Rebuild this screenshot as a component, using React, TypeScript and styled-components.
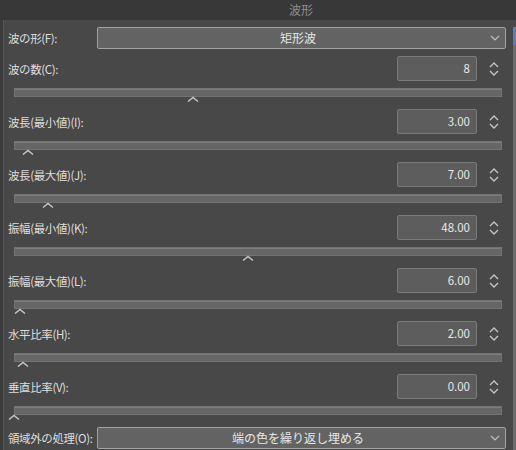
import React from "react";
import styled, { createGlobalStyle } from "styled-components";

const GlobalStyle = createGlobalStyle`
  html, body {
    margin: 0;
    padding: 0;
    background: #484848;
  }
  body {
    font-family: "Noto Sans CJK JP", "Noto Sans", sans-serif;
    font-size: 12px;
    color: #dedede;
    overflow: hidden;
  }
`;

const TitleBar = styled.div`
  height: 20px;
  background: #383838;
  color: #8e8e8e;
  font-size: 12px;
  line-height: 20px;
  padding-left: 289px;
`;

const Body = styled.div`
  display: flex;
  height: 430px;
`;

const Gutter = styled.div`
  width: 3px;
  background: #3c3c3c;
`;

const Panel = styled.div`
  flex: 1;
  display: flex;
  flex-direction: column;
  border-left: 1px solid #575757;
  padding: 7px 7px 0 4px;
`;

const ScrollStrip = styled.div`
  width: 3px;
  margin-top: 7px;
  display: flex;
  flex-direction: column;
  background: #6e6e6e;
`;

const ScrollThumb = styled.div`
  height: 18px;
  background: #5f7db5;
`;

const Row = styled.div<{ $gap?: number }>`
  display: flex;
  align-items: center;
  margin-bottom: ${(p) => p.$gap ?? 0}px;
`;

const Label = styled.div<{ $w?: number }>`
  width: ${(p) => (p.$w ? `${p.$w}px` : "auto")};
  flex: ${(p) => (p.$w ? "none" : "1")};
  white-space: nowrap;
  font-size: 11.5px;
  letter-spacing: -0.4px;
`;

const Select = styled.div`
  flex: 1;
  height: 22px;
  box-sizing: border-box;
  background: #636363;
  border: 1px solid #a2a2a2;
  border-radius: 2px;
  display: flex;
  align-items: center;
`;

const SelectText = styled.div`
  flex: 1;
  text-align: center;
  color: #e6e6e6;
  padding-left: 8px;
  line-height: 20px;
`;

const Chevron = styled.svg`
  width: 10px;
  height: 6px;
  margin-right: 5px;
`;

const Block = styled.div`
  display: flex;
  flex-direction: column;
`;

const NumBox = styled.div`
  width: 80px;
  height: 25px;
  box-sizing: border-box;
  background: #5d5d5d;
  border: 1px solid #7a7a7a;
  border-radius: 2px;
  color: #e8e8e8;
  text-align: right;
  padding-right: 6px;
  line-height: 23px;
  font-size: 11.5px;
`;

const Spin = styled.svg`
  width: 10px;
  height: 16px;
  margin: 0 7px 0 12px;
`;

const TrackWrap = styled.div`
  position: relative;
  margin: 7px 4px 12px 6px;
`;

const Track = styled.div`
  height: 9px;
  box-sizing: border-box;
  background: #666666;
  border: 1px solid #737373;
  box-shadow: inset 0 1px 0 #7d7d7d;
`;

const Caret = styled.svg`
  position: absolute;
  top: 8px;
  width: 12px;
  height: 6px;
  margin-left: -6px;
`;

const rows = [
  { label: "波の数(C):", value: "8", thumb: 193 },
  { label: "波長(最小値)(I):", value: "3.00", thumb: 28 },
  { label: "波長(最大値)(J):", value: "7.00", thumb: 48 },
  { label: "振幅(最小値)(K):", value: "48.00", thumb: 248 },
  { label: "振幅(最大値)(L):", value: "6.00", thumb: 20 },
  { label: "水平比率(H):", value: "2.00", thumb: 23 },
  { label: "垂直比率(V):", value: "0.00", thumb: 14 },
];

const DownChevron = () => (
  <Chevron viewBox="0 0 10 6">
    <path d="M1 1 L5 5 L9 1" fill="none" stroke="#bdbdbd" strokeWidth="1.2" />
  </Chevron>
);

const SpinIcon = () => (
  <Spin viewBox="0 0 10 16">
    <path d="M1 6 L5 2 L9 6" fill="none" stroke="#c4c4c4" strokeWidth="1.4" />
    <path d="M1 10 L5 14 L9 10" fill="none" stroke="#c4c4c4" strokeWidth="1.4" />
  </Spin>
);

const SpinRow = ({ label, value, thumb }: any) => (
  <Block>
    <Row>
      <Label>{label}</Label>
      <NumBox>{value}</NumBox>
      <SpinIcon />
    </Row>
    <TrackWrap>
      <Track />
      <Caret viewBox="0 0 12 6" style={{ left: thumb - 14 }}>
        <path d="M1 5.5 L6 1.5 L11 5.5" fill="none" stroke="#c8c8c8" strokeWidth="1.4" />
      </Caret>
    </TrackWrap>
  </Block>
);

export default function App() {
  return (
    <>
      <GlobalStyle />
      <TitleBar>波形</TitleBar>
      <Body>
        <Gutter />
        <Panel>
          <Row $gap={7}>
            <Label $w={89}>波の形(F):</Label>
            <Select>
              <SelectText>矩形波</SelectText>
              <DownChevron />
            </Select>
          </Row>
          {rows.map((r) => (
            <SpinRow key={r.label} {...r} />
          ))}
          <Row>
            <Label $w={89}>領域外の処理(O):</Label>
            <Select>
              <SelectText>端の色を繰り返し埋める</SelectText>
              <DownChevron />
            </Select>
          </Row>
        </Panel>
        <ScrollStrip>
          <ScrollThumb />
        </ScrollStrip>
      </Body>
    </>
  );
}
